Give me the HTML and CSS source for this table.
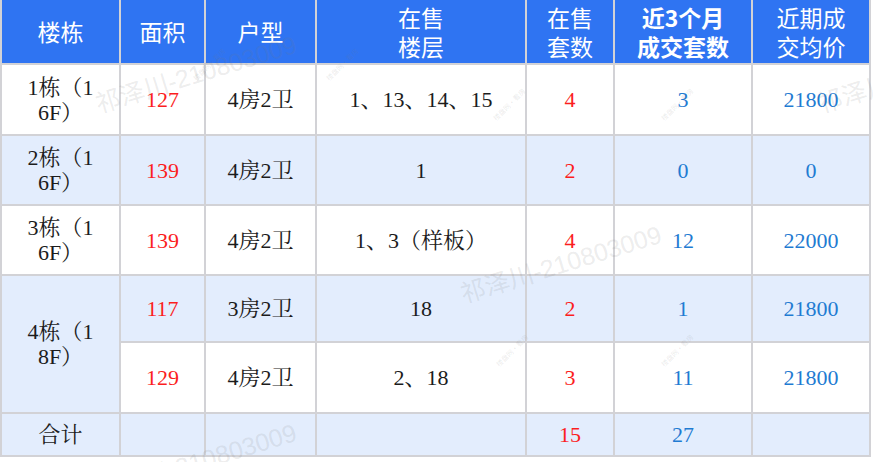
FILE: index.html
```html
<!DOCTYPE html>
<html lang="zh">
<head>
<meta charset="utf-8">
<title>楼栋在售统计</title>
<link rel="stylesheet" href="styles.css">
</head>
<body>
<div class="sheet">
  <table class="tbl">
    <colgroup>
      <col class="c1"><col class="c2"><col class="c3"><col class="c4"><col class="c5"><col class="c6"><col class="c7">
    </colgroup>
    <thead>
      <tr class="hrow">
        <th>楼栋</th>
        <th>面积</th>
        <th>户型</th>
        <th>在售<br>楼层</th>
        <th>在售<br>套数</th>
        <th class="strong">近3个月<br>成交套数</th>
        <th>近期成<br>交均价</th>
      </tr>
    </thead>
    <tbody>
      <tr class="r1">
        <td>1栋（1<br>6F）</td>
        <td class="red">127</td>
        <td>4房2卫</td>
        <td>1、13、14、15</td>
        <td class="red">4</td>
        <td class="blue">3</td>
        <td class="blue">21800</td>
      </tr>
      <tr class="r2 alt">
        <td>2栋（1<br>6F）</td>
        <td class="red">139</td>
        <td>4房2卫</td>
        <td>1</td>
        <td class="red">2</td>
        <td class="blue">0</td>
        <td class="blue">0</td>
      </tr>
      <tr class="r3">
        <td>3栋（1<br>6F）</td>
        <td class="red">139</td>
        <td>4房2卫</td>
        <td>1、3（样板）</td>
        <td class="red">4</td>
        <td class="blue">12</td>
        <td class="blue">22000</td>
      </tr>
      <tr class="r4 alt">
        <td rowspan="2" class="span">4栋（1<br>8F）</td>
        <td class="red">117</td>
        <td>3房2卫</td>
        <td>18</td>
        <td class="red">2</td>
        <td class="blue">1</td>
        <td class="blue">21800</td>
      </tr>
      <tr class="r5">
        <td class="red">129</td>
        <td>4房2卫</td>
        <td>2、18</td>
        <td class="red">3</td>
        <td class="blue">11</td>
        <td class="blue">21800</td>
      </tr>
      <tr class="r6 alt">
        <td>合计</td>
        <td></td>
        <td></td>
        <td></td>
        <td class="red">15</td>
        <td class="blue">27</td>
        <td></td>
      </tr>
    </tbody>
  </table>
  <div class="marks" aria-hidden="true">
    <span class="wm wm1">祁泽川-210803009</span>
    <span class="wm wm2">祁泽川-210803009</span>
    <span class="wm wm3">祁泽川-210803009</span>
    <span class="wm wm4">祁泽川-210803009</span>
    <span class="logo lg1">楼盘网·看房</span>
    <span class="logo lg2">楼盘网·看房</span>
    <span class="logo lg3">楼盘网·看房</span>
    <span class="logo lg4">楼盘网·看房</span>
    <span class="logo lg5">楼盘网·看房</span>
    <span class="logo lg6">楼盘网·看房</span>
  </div>
</div>
</body>
</html>
```
FILE: styles.css
```css
html, body {
  margin: 0;
  padding: 0;
  background: #ffffff;
}

.sheet {
  position: relative;
  width: 874px;
  height: 462px;
  overflow: hidden;
}

.tbl {
  border-collapse: collapse;
  table-layout: fixed;
  width: 869px;
  font-family: "Liberation Serif", "Noto Serif CJK SC", "Noto Sans CJK SC", serif;
  font-size: 22px;
  line-height: 25px;
  color: #1c1c1c;
}

.c1 { width: 119px; }
.c2 { width: 85px; }
.c3 { width: 111px; }
.c4 { width: 210px; }
.c5 { width: 88px; }
.c6 { width: 138px; }
.c7 { width: 118px; }

.tbl th,
.tbl td {
  border: 2px solid #d2d2d6;
  text-align: center;
  vertical-align: middle;
  padding: 0;
}

.tbl th {
  border-top: 0;
  background: #2f74f2;
  color: #ffffff;
  font-family: "Noto Sans CJK SC", "Noto Sans", sans-serif;
  font-weight: normal;
  font-size: 23px;
  line-height: 29px;
}

.tbl th.strong {
  font-weight: bold;
}

.hrow th { height: 63px; }
.r1 td { height: 69px; }
.r2 td { height: 68px; }
.r3 td { height: 68px; }
.r4 td { height: 65px; }
.r5 td { height: 69px; }
.r6 td { height: 41px; }

.alt td { background: #e3edfd; }

.red { color: #fb1e1e; }
.blue { color: #1f7bd2; }

.marks {
  position: absolute;
  inset: 0;
  pointer-events: none;
}

.wm {
  position: absolute;
  font-family: "Liberation Sans", "Noto Sans CJK SC", sans-serif;
  font-size: 25px;
  line-height: 25px;
  color: rgba(120, 120, 120, 0.15);
  white-space: nowrap;
  transform-origin: 0 100%;
  transform: rotate(-17deg);
}

.wm1 { left: 100px; top: 92px; }
.wm2 { left: 465px; top: 282px; }
.wm3 { left: 822px; top: 92px; }
.wm4 { left: 100px; top: 480px; }

.logo {
  position: absolute;
  font-family: "Noto Sans CJK SC", sans-serif;
  font-size: 7px;
  line-height: 8px;
  color: rgba(120, 120, 120, 0.16);
  white-space: nowrap;
  transform-origin: 0 100%;
  transform: rotate(-45deg);
}

.lg1 { left: 197px; top: 74px; }
.lg2 { left: 330px; top: 74px; }
.lg3 { left: 497px; top: 114px; }
.lg4 { left: 665px; top: 114px; }
.lg5 { left: 500px; top: 360px; }
.lg6 { left: 665px; top: 360px; }
```
